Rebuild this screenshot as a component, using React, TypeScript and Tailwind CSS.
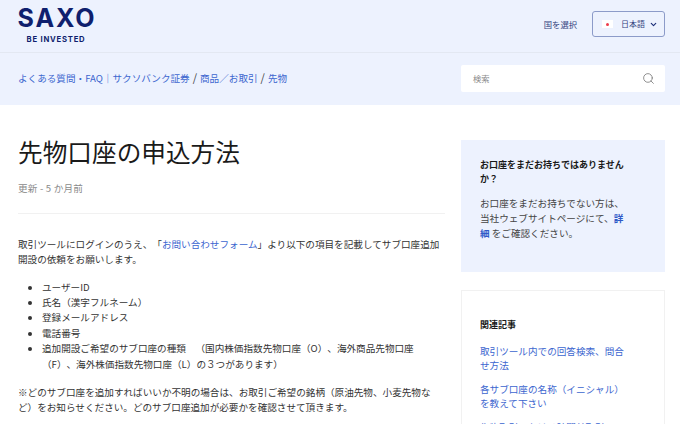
import { ChevronDown, Search } from "lucide-react";

const font = "font-['Noto_Sans_CJK_JP','Noto_Sans',sans-serif] [text-spacing-trim:space-all]";

function Header() {
  return (
    <header className="h-[53px] flex items-center justify-between pl-[18px] pr-[15px] pb-[4px] border-b border-[#e3e8f2]">
      <div className="flex flex-col items-center w-[76px] pt-[2px]">
        <span className="font-['Inter',sans-serif] font-bold text-[#0f1f6e] text-[25px] leading-[24px] tracking-[0.08em] ml-[2px]">
          SAXO
        </span>
        <span className="font-['Inter',sans-serif] font-bold text-[#0f1f6e] text-[7.7px] leading-[11px] tracking-[0.1em] mt-[4px]">
          BE INVESTED
        </span>
      </div>
      <div className="flex items-center gap-[15px]">
        <span className="text-[8.3px] text-[#33437f]">国を選択</span>
        <button className="w-[73px] h-[26px] rounded-[3px] border-[1.5px] border-[#8c9bc9] flex items-center pl-[9px] pr-[6px] text-[8px] text-[#33437f] whitespace-nowrap">
          <span className="w-[11px] h-[8px] bg-white flex items-center justify-center mr-[8px]">
            <span className="w-[3px] h-[3px] rounded-full bg-[#ee3b4a]" />
          </span>
          <span>日本語</span>
          <ChevronDown className="w-[9px] h-[9px] ml-auto text-[#1c2d78]" strokeWidth={3} />
        </button>
      </div>
    </header>
  );
}

function SubBar() {
  return (
    <div className="h-[52px] flex items-center justify-between pl-[18px] pr-[15px] pb-[1px]">
      <nav className="text-[9.6px] text-[#3c66cf] pb-[2px]">
        <a>よくある質問・FAQ｜サクソバンク証券</a>
        <span className="text-[11px] text-[#444] mx-[3px]">/</span>
        <a>商品／お取引</a>
        <span className="text-[11px] text-[#444] mx-[3px]">/</span>
        <a>先物</a>
      </nav>
      <div className="w-[204px] h-[27px] bg-white rounded-[2px] flex items-center justify-between pl-[12px] pr-[10px]">
        <span className="text-[8.3px] text-[#8b8b8b]">検索</span>
        <Search className="w-[13px] h-[13px] text-[#777]" strokeWidth={1.5} />
      </div>
    </div>
  );
}

function Article() {
  return (
    <article className="w-[427px] text-[9.6px] leading-[15.36px] text-[#333]">
      <h1 className="text-[24.67px] leading-[22px] text-[#1a1a1a]">先物口座の申込方法</h1>
      <p className="text-[#8a8a8a] mt-[19px] leading-[14px] tracking-[0.02em]">更新 - 5 か月前</p>
      <div className="border-t border-[#f1f1f1] mt-[18px]" />
      <p className="mt-[23px]">
        取引ツールにログインのうえ、「<a className="text-[#3c66cf]">お問い合わせフォーム</a>」より以下の項目を記載してサブ口座追加開設の依頼をお願いします。
      </p>
      <ul className="list-disc pl-[24px] mt-[12px]">
        <li>ユーザーID</li>
        <li>氏名（漢字フルネーム）</li>
        <li>登録メールアドレス</li>
        <li>電話番号</li>
        <li>追加開設ご希望のサブ口座の種類　（国内株価指数先物口座（O）、海外商品先物口座（F）、海外株価指数先物口座（L）の３つがあります）</li>
      </ul>
      <p className="mt-[13px]">
        ※どのサブ口座を追加すればいいか不明の場合は、お取引ご希望の銘柄（原油先物、小麦先物など）をお知らせください。どのサブ口座追加が必要かを確認させて頂きます。
      </p>
    </article>
  );
}

function Sidebar() {
  return (
    <aside className="w-[204px] shrink-0 text-[9.6px] leading-[15px]">
      <div className="h-[132px] bg-[#edf2fe] pt-[18px] pl-[19px] pr-[37px]">
        <h2 className="font-bold text-[#1a1a1a] text-[9px] leading-[13.5px]">お口座をまだお持ちではありませんか？</h2>
        <p className="mt-[11px] text-[#444]">
          お口座をまだお持ちでない方は、当社ウェブサイトページにて、<a className="font-bold text-[#2f5ac8]">詳細</a> をご確認ください。
        </p>
      </div>
      <div className="mt-[18px] border border-[#f1f1f1] h-[160px] pt-[27px] pl-[18px] pr-[37px] leading-[14.4px]">
        <h3 className="font-bold text-[#1a1a1a] text-[9px] leading-[14px]">関連記事</h3>
        <a className="block mt-[12px] text-[#3c66cf]">取引ツール内での回答検索、問合せ方法</a>
        <a className="block mt-[9px] text-[#3c66cf]">各サブ口座の名称（イニシャル）を教えて下さい</a>
        <a className="block mt-[9px] text-[#3c66cf]">先物取引における時間外取引</a>
      </div>
    </aside>
  );
}

export default function App() {
  return (
    <div className={`w-[680px] h-[424px] overflow-hidden bg-white ${font}`}>
      <div className="bg-[#edf2fe]">
        <Header />
        <SubBar />
      </div>
      <main className="flex justify-between pl-[18px] pr-[15px] pt-[35px]">
        <Article />
        <Sidebar />
      </main>
    </div>
  );
}
